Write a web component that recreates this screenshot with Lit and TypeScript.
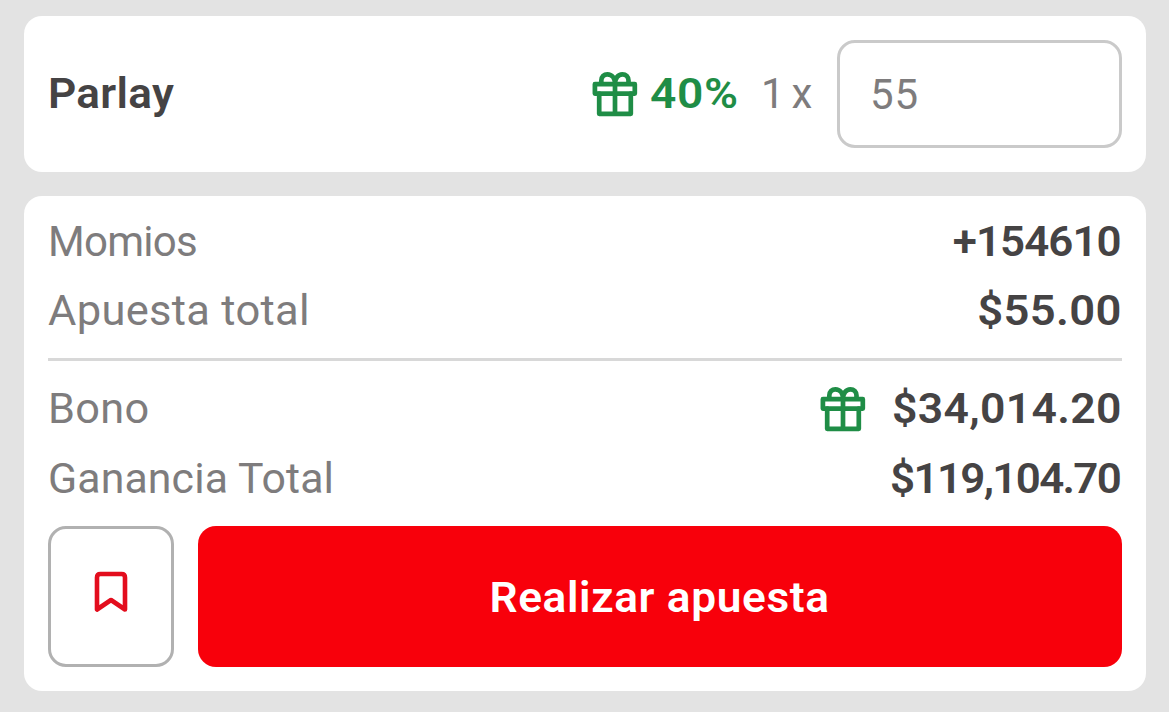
import { LitElement, html, css } from "lit";
import { customElement, property, state } from "lit/decorators.js";

@customElement("gift-icon")
class GiftIcon extends LitElement {
  static styles = css`
    :host { display: block; width: 46px; height: 46px; flex: none; }
    svg { display: block; fill: none; stroke: #1f8d46; stroke-width: 4.7; stroke-linejoin: round; stroke-linecap: round; }
  `;
  render() {
    return html`<svg width="46" height="46" viewBox="0 0 46 46">
      <rect x="2.9" y="13.2" width="39.9" height="9.4" />
      <path d="M7.2 22.6V42.8H38.8V22.6M23 13V42.8" />
      <path d="M9.3 12.6V9.6C9.3 5.8 12 3.3 15.4 3.3C20 3.3 23 7.2 23 13C23 7.2 26 3.3 30.4 3.3C33.8 3.3 36.5 5.8 36.5 9.6V12.6" />
    </svg>`;
  }
}

@customElement("summary-row")
class SummaryRow extends LitElement {
  @property() label = "";
  @property() value = "";
  @property({ type: Boolean }) gift = false;
  static styles = css`
    :host { display: flex; align-items: center; justify-content: space-between; height: 70px; }
    .label { color: #7e7c7d; letter-spacing: var(--label-spacing, 0px); transform: scaleX(var(--label-stretch, 1)); transform-origin: left center; }
    .amount { display: flex; align-items: center; gap: 39px; color: #454344; font-weight: 600; }
    .value { letter-spacing: var(--value-spacing, 0px); margin-right: calc(1px - var(--value-spacing, 0px)); transform: scaleX(var(--value-stretch, 1)); transform-origin: right center; }
  `;
  render() {
    return html`<span class="label">${this.label}</span>
      <span class="amount">${this.gift ? html`<gift-icon></gift-icon>` : ""}<span class="value">${this.value}</span></span>`;
  }
}

@customElement("app-root")
class AppRoot extends LitElement {
  @state() private stake = "55";
  static styles = css`
    :host { display: block; box-sizing: border-box; height: 712px; background: #e3e3e3; padding: 16px 23px 21px 24px; font: 400 42px/50px Roboto, "Liberation Sans", sans-serif; color: #7e7c7d; }
    .card { box-sizing: border-box; background: #fff; border-radius: 18px; }
    .parlay { display: flex; align-items: center; height: 156px; padding: 0 24px; margin-bottom: 24px; }
    .title { flex: 1; color: #454344; font-weight: 600; letter-spacing: 0.3px; transform: scaleX(1.05); transform-origin: left center; }
    .bonus { color: #1f8d46; font-weight: 600; width: 87px; margin: 0 24px 0 12px; letter-spacing: 0.5px; white-space: nowrap; transform: scaleX(1.1); transform-origin: left center; }
    .times { width: 52px; margin-right: 24px; letter-spacing: 0.5px; word-spacing: -4.5px; white-space: nowrap; }
    .stake { box-sizing: border-box; width: 285px; height: 108px; border: 3px solid #cacaca; border-radius: 18px; padding: 0 30px; font: inherit; color: inherit; letter-spacing: 0.8px; background: #fff; outline: none; }
    .summary { height: 495px; padding: 11px 24px 24px; }
    .rule { height: 3px; background: #d8d8d8; margin: 12px 0 13px; }
    .momios { --label-spacing: -0.7px; --value-spacing: -0.9px; --value-stretch: 1.045; }
    .total { --label-spacing: 0.3px; --label-stretch: 1.035; --value-spacing: 0.3px; --value-stretch: 1.08; height: 69px; padding-bottom: 1px; box-sizing: border-box; }
    .bono { --label-spacing: 0.3px; --label-stretch: 1.03; --value-spacing: 0.3px; --value-stretch: 1.06; }
    .ganancia { --label-spacing: 0.1px; --label-stretch: 1.02; --value-spacing: -1.6px; --value-stretch: 1.045; }
    .momios, .ganancia { margin-right: -0.6px; }
    .actions { display: flex; gap: 24px; margin-top: 12px; height: 141px; }
    button { font: inherit; padding: 0; margin: 0; border-radius: 18px; }
    .save { box-sizing: border-box; width: 126px; border: 3px solid #b1b1b1; background: #fff; display: flex; justify-content: center; align-items: center; }
    .save svg { fill: none; stroke: #e30d1d; stroke-width: 4.6; stroke-linejoin: round; margin-bottom: 9px; }
    .place { flex: 1; border: 0; padding-top: 2px; background: #f8000b; color: #fff; font-weight: 600; letter-spacing: 0.6px; }
    .place span { display: inline-block; transform: scaleX(1.053); }
  `;
  render() {
    return html`
      <section class="card parlay">
        <span class="title">Parlay</span>
        <gift-icon></gift-icon>
        <span class="bonus">40%</span>
        <span class="times">1 x</span>
        <input class="stake" .value=${this.stake} aria-label="Apuesta" />
      </section>
      <section class="card summary">
        <summary-row class="momios" label="Momios" value="+154610"></summary-row>
        <summary-row class="total" label="Apuesta total" value="$55.00"></summary-row>
        <div class="rule"></div>
        <summary-row class="bono" label="Bono" value="$34,014.20" gift></summary-row>
        <summary-row class="ganancia" label="Ganancia Total" value="$119,104.70"></summary-row>
        <div class="actions">
          <button class="save" aria-label="Guardar">
            <svg width="34" height="42" viewBox="0 0 34 42"><path d="M3 38.5V6.4Q3 3 6.4 3H27.6Q31 3 31 6.4V38.5L17 29Z" /></svg>
          </button>
          <button class="place"><span>Realizar apuesta</span></button>
        </div>
      </section>`;
  }
}
